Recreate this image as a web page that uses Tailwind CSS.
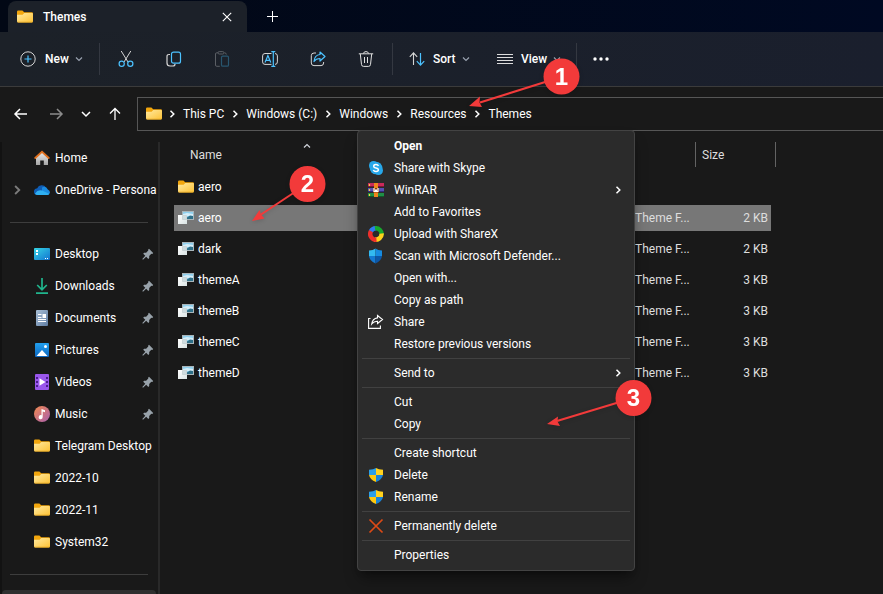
<!DOCTYPE html>
<html lang="en">
  <head>
    <meta charset="UTF-8" />
    <meta name="viewport" content="width=device-width, initial-scale=1.0" />
    <title>Themes</title>
    <script src="https://cdn.jsdelivr.net/npm/@tailwindcss/browser@4"></script>
  </head>
  <body
    class="relative h-screen overflow-hidden flex flex-col bg-[#191919] font-['Roboto','Noto_Sans',sans-serif] text-xs text-white"
  >
    <!-- Shared icons -->
    <svg class="absolute size-0" aria-hidden="true">
      <defs>
        <linearGradient id="folderFill" x1="0" y1="0" x2="1" y2="1">
          <stop offset="0" stop-color="#ffe9a0" />
          <stop offset="1" stop-color="#fdc235" />
        </linearGradient>
        <linearGradient id="paper" x1="0" y1="0" x2="1" y2="1">
          <stop offset="0" stop-color="#ffffff" />
          <stop offset="1" stop-color="#d9e3e3" />
        </linearGradient>
        <linearGradient id="desk" x1="0" y1="0" x2="1" y2="1">
          <stop offset="0" stop-color="#35d6e6" />
          <stop offset="1" stop-color="#1273d0" />
        </linearGradient>
        <linearGradient id="doc" x1="0" y1="0" x2="1" y2="1">
          <stop offset="0" stop-color="#a9bfd6" />
          <stop offset="1" stop-color="#5f7da3" />
        </linearGradient>
        <linearGradient id="music" x1="0" y1="0" x2="1" y2="1">
          <stop offset="0" stop-color="#f28a4e" />
          <stop offset="1" stop-color="#a85fb0" />
        </linearGradient>
        <linearGradient id="pic" x1="0" y1="0" x2="0" y2="1">
          <stop offset="0" stop-color="#22a0ee" />
          <stop offset="1" stop-color="#0c66c0" />
        </linearGradient>
        <linearGradient id="house" x1="0" y1="0" x2="0" y2="1">
          <stop offset="0" stop-color="#ececec" />
          <stop offset="1" stop-color="#a5a5a5" />
        </linearGradient>
      </defs>
      <symbol id="folder" viewBox="0 0 16 16">
        <path d="M0 2.700Q0 1.500 1.200 1.500h4.200l1.800 1.700h7.600Q16 3.200 16 4.500v4H0z" fill="#f2a60d" />
        <path d="M0 5.700h5.600L7.300 4.100h7.600Q16 4.100 16 5.200v7.100q0 1.200-1.200 1.200H1.200Q0 13.500 0 12.300z" fill="url(#folderFill)" />
        <path d="M.3 12.800q.3.700 1 .7h13.400q.7 0 1-.7z" fill="#e5a51c" />
      </symbol>
      <symbol id="theme" viewBox="0 0 16 16">
        <path d="M4 1h12v9H4z" fill="#a9b5ba" />
        <path d="M5 2h10v7H5z" fill="#8fd0ee" />
        <path d="M5 4l4-1 6 1v2H5z" fill="#d4eefa" />
        <path d="M9 7.500l3-2 3 .5V9H9z" fill="#2d6f88" />
        <path d="M0 5h9v9H0z" fill="url(#paper)" />
        <path d="M4.500 5.500h4v4h-4z" fill="#cfdcdf" stroke="#b4c2c5" stroke-width=".5" />
      </symbol>
      <symbol id="chevron" viewBox="0 0 8 8">
        <path d="M2.500.8 5.800 4 2.500 7.200" fill="none" stroke="currentColor" stroke-width="1.500" />
      </symbol>
      <symbol id="down" viewBox="0 0 8 8">
        <path d="M1 2.500 4 5.500 7 2.500" fill="none" stroke="currentColor" stroke-width="1.200" />
      </symbol>
      <symbol id="pin" viewBox="0 0 12 12">
        <path d="M7 .8 11.200 5l-.9.900-1-.2L7.200 8v2l-.9.900L4.200 8.700 1 11.700l-.700-.7 3-3.200L1.200 5.700l.9-.9h2l2.200-2.200-.2-.9z" fill="#98a2aa" />
      </symbol>
      <symbol id="uac" viewBox="0 0 14 14">
        <path d="M7 0Q4.500 1.800 0 1.800V7h7z" fill="#2b9fe8" />
        <path d="M7 0q2.500 1.800 7 1.800V7H7z" fill="#ffd21e" />
        <path d="M0 7h7v7Q.8 11.500 0 7z" fill="#ffc90e" />
        <path d="M14 7H7v7q6.200-2.500 7-7z" fill="#1a83d6" />
      </symbol>
    </svg>

    <!-- Title bar -->
    <header class="shrink-0 h-8 pl-2 flex items-end bg-linear-to-r from-[#020815] to-[#000922]">
      <div class="h-[31px] w-[239px] pl-[9px] pr-3 flex items-center rounded-t-lg bg-[#1c2129]">
        <svg class="size-4"><use href="#folder" /></svg>
        <span class="ml-[10px] grow font-medium">Themes</span>
        <button class="size-4 grid place-items-center" aria-label="Close tab">
          <svg class="size-[10px]" viewBox="0 0 10 10"><path d="M.8.800l8.400 8.400M9.200.8.800 9.200" stroke="#fff" stroke-width="1.100" /></svg>
        </button>
      </div>
      <button class="h-8 w-[50px] grid place-items-center" aria-label="New tab">
        <svg class="size-[11px]" viewBox="0 0 11 11"><path d="M5.500 0v11M0 5.500h11" stroke="#fff" /></svg>
      </button>
    </header>

    <!-- Command bar -->
    <div
      class="shrink-0 h-[55px] flex items-center border-b border-[#3b3b3b] bg-linear-to-r from-[#1c2128] to-[#1a1f2d]"
      role="toolbar"
      aria-label="Commands"
    >
      <button class="w-[99px] pl-5 flex items-center font-medium">
        <svg class="size-4" viewBox="0 0 16 16" fill="none">
          <circle cx="8" cy="8" r="7.200" stroke="#d5d5d5" />
          <path d="M8 4.500v7M4.500 8h7" stroke="#4cc2ff" stroke-width="1.200" />
        </svg>
        <span class="ml-[9px]">New</span>
        <svg class="ml-[6px] size-2 text-gray-400"><use href="#down" /></svg>
      </button>
      <div class="h-8 w-px bg-[#343841]"></div>
      <div class="px-[2px] flex">
        <button class="w-12 grid place-items-center" aria-label="Cut">
          <svg class="size-4" viewBox="0 0 16 16" fill="none">
            <path d="M3.200 0l6.800 11M12.800 0 6 11" stroke="#d5d5d5" />
            <circle cx="3.700" cy="12.800" r="2.600" stroke="#4cc2ff" stroke-width="1.200" />
            <circle cx="12.300" cy="12.800" r="2.600" stroke="#4cc2ff" stroke-width="1.200" />
          </svg>
        </button>
        <button class="w-12 grid place-items-center" aria-label="Copy">
          <svg class="size-4" viewBox="0 0 16 16" fill="none">
            <path d="M4 3.500H3Q1 3.500 1 5.500V12q0 3 3 3h3q2 0 2-2" stroke="#d5d5d5" stroke-width="1.200" />
            <rect x="5.500" y="1.200" width="9" height="11" rx="2" stroke="#4cc2ff" stroke-width="1.200" />
          </svg>
        </button>
        <button class="w-12 grid place-items-center" aria-label="Paste" disabled>
          <svg class="size-4" viewBox="0 0 16 16" fill="none">
            <path d="M4 1.800H2.800Q1.500 1.800 1.500 3v11q0 1.300 1.300 1.300h3M10.500 1.800q1.800 0 1.800 1.700" stroke="#5b5f65" />
            <rect x="4" y=".6" width="6" height="2.400" rx="1.200" stroke="#5b5f65" />
            <rect x="7.500" y="5.200" width="7" height="10" rx="1.300" stroke="#28566f" stroke-width="1.200" />
          </svg>
        </button>
        <button class="w-12 grid place-items-center" aria-label="Rename">
          <svg class="size-4" viewBox="0 0 16 16" fill="none">
            <path d="M9.500 2.500H3q-2.400 0-2.400 2.400v6q0 2.500 2.400 2.500h6.500M13 2.500q2.400.2 2.400 2.400v6q0 2.500-2.400 2.500" stroke="#d5d5d5" />
            <path d="M3 11.500 5.900 4.500 8.800 11.500M4 9.300h3.800M11.300 1v14M9.300.6h4M9.300 15.400h4" stroke="#4cc2ff" stroke-width="1.200" />
          </svg>
        </button>
        <button class="w-12 grid place-items-center" aria-label="Share">
          <svg class="size-4" viewBox="0 0 16 16" fill="none">
            <path d="M6 2H4Q1.300 2 1.300 4.700V12q0 2.600 2.700 2.600h7q2.600 0 2.600-2.600v-1" stroke="#d5d5d5" />
            <path d="M10 1l5 4.500L10 10V7.500q-4 0-6 3Q4.500 4 10 3.500z" stroke="#4cc2ff" stroke-width="1.200" stroke-linejoin="round" />
          </svg>
        </button>
        <button class="w-12 grid place-items-center" aria-label="Delete">
          <svg class="size-4" viewBox="0 0 16 16" fill="none" stroke="#e0e0e0">
            <path d="M.8 2.800h14.400M5.500 2.500Q5.700.6 8 .6t2.500 1.900M2.300 3l1.200 10.500q.2 1.900 2 1.900h5q1.800 0 2-1.900L13.700 3M6.500 6v6M9.500 6v6" />
          </svg>
        </button>
      </div>
      <div class="h-8 w-px bg-[#343841]"></div>
      <button class="w-[104px] pl-4 flex items-center font-medium">
        <svg class="size-4" viewBox="0 0 16 16" fill="none">
          <path d="M4.500 14V2M.8 5.800l3.700-4 3.700 4" stroke="#d5d5d5" stroke-width="1.100" />
          <path d="M11.500 2v12M7.800 10.200l3.700 4 3.700-4" stroke="#4cc2ff" stroke-width="1.200" />
        </svg>
        <span class="ml-2">Sort</span>
        <svg class="ml-[6px] size-2 text-gray-400"><use href="#down" /></svg>
      </button>
      <button class="w-[79px] flex items-center font-medium">
        <svg class="size-4" viewBox="0 0 16 16"><path d="M0 3.500h16M0 6.500h16M0 9.500h16M0 12.500h16" stroke="#dcdcdc" /></svg>
        <span class="ml-2">View</span>
        <svg class="ml-[6px] size-2 text-gray-400"><use href="#down" /></svg>
      </button>
      <div class="h-8 w-px bg-[#343841]"></div>
      <button class="w-12 grid place-items-center" aria-label="See more">
        <svg class="h-1 w-4" viewBox="0 0 16 4" fill="#fff"><circle cx="2" cy="2" r="1.700" /><circle cx="8" cy="2" r="1.700" /><circle cx="14" cy="2" r="1.700" /></svg>
      </button>
    </div>

    <!-- Navigation -->
    <nav class="shrink-0 h-11 pt-[10px] flex" aria-label="Address">
      <div class="w-[137px] h-[34px] pl-[13px] flex items-center">
        <button class="w-4" aria-label="Back">
          <svg class="size-4" viewBox="0 0 16 16" fill="none" stroke="#fff" stroke-width="1.500"><path d="M14 8H2M7 3 2 8l5 5" /></svg>
        </button>
        <button class="ml-[19px] w-4" aria-label="Forward">
          <svg class="size-4" viewBox="0 0 16 16" fill="none" stroke="#8c8c8c" stroke-width="1.500"><path d="M2 8h12M9 3l5 5-5 5" /></svg>
        </button>
        <button class="ml-[17px] w-[10px]" aria-label="Recent locations">
          <svg class="size-[10px]" viewBox="0 0 10 10" fill="none" stroke="#fff" stroke-width="1.500"><path d="M1 3l4 4 4-4" /></svg>
        </button>
        <button class="ml-4 w-4" aria-label="Up">
          <svg class="size-4" viewBox="0 0 16 16" fill="none" stroke="#fff" stroke-width="1.300"><path d="M8 14V2.500M3 7.500l5-5 5 5" /></svg>
        </button>
      </div>
      <div class="grow h-[34px] pl-2 flex items-center border border-r-0 border-[#565656]">
        <svg class="size-4"><use href="#folder" /></svg>
        <svg class="mx-[6px] size-2"><use href="#chevron" /></svg>
        <button class="pl-[1px]">This PC</button>
        <svg class="mx-[7px] size-2"><use href="#chevron" /></svg>
        <button>Windows (C:)</button>
        <svg class="mx-[7px] size-2"><use href="#chevron" /></svg>
        <button>Windows</button>
        <svg class="mx-[7px] size-2"><use href="#chevron" /></svg>
        <button>Resources</button>
        <svg class="mx-[7px] size-2"><use href="#chevron" /></svg>
        <button>Themes</button>
      </div>
    </nav>

    <main class="grow min-h-0 flex">
      <!-- Sidebar -->
      <aside class="shrink-0 w-[160px] pt-[11px]">
        <div class="h-full border-l-2 border-l-[#121212] border-r-2 border-r-[#292929] overflow-hidden">
          <ul class="w-[154px] *:h-8 *:flex *:items-center *:whitespace-nowrap">
            <li class="pl-8">
              <svg class="shrink-0 size-4" viewBox="0 0 16 16">
                <path d="M2 7.500 8 2l6 5.500V15H9.800v-4.500H6.200V15H2z" fill="url(#house)" />
                <path d="M1.200 8 8 1.800 14.800 8" fill="none" stroke="#e0701e" stroke-width="1.800" stroke-linecap="round" />
              </svg>
              <a href="#home" class="ml-[5px]">Home</a>
            </li>
            <li class="pl-[10px]">
              <svg class="shrink-0 size-[10px] text-[#7b7b7b]"><use href="#chevron" /></svg>
              <svg class="shrink-0 ml-3 size-4" viewBox="0 0 16 16">
                <path d="M3.500 13A3.400 3.400 0 0 1 3.200 6.200 5 5 0 0 1 12 5.500z" fill="#0f5db5" />
                <path d="M8 5.500q4-2 5.800 2Q16 8.500 16 10.500 15.500 13 13 13H8z" fill="#1b8be0" />
                <path d="M1 11.500Q4 7 8 8.500l7.200 3.300Q14.500 13 13 13H3.500Q1.800 13 1 11.500z" fill="#2fb0f2" />
              </svg>
              <a href="#onedrive" class="ml-[5px]">OneDrive - Persona</a>
            </li>
            <li class="px-2"><hr class="grow border-[#3d3d3d]" /></li>
            <li class="pl-8 pr-[2px]">
              <svg class="shrink-0 size-4" viewBox="0 0 16 16">
                <rect y="2" width="16" height="12" rx="1" fill="url(#desk)" />
                <path d="M2 4h2v2H2zM2 7h2v2H2zM11 12h1v1h-1zM13 12h1v1h-1z" fill="#fff" />
              </svg>
              <a href="#desktop" class="ml-[5px] grow">Desktop</a>
              <svg class="size-3"><use href="#pin" /></svg>
            </li>
            <li class="pl-8 pr-[2px]">
              <svg class="shrink-0 size-4" viewBox="0 0 16 16" fill="none" stroke="#20b58d" stroke-width="1.700">
                <path d="M8 0v11.500M3.200 7 8 11.800 12.800 7M2 15.100h12" />
              </svg>
              <a href="#downloads" class="ml-[5px] grow">Downloads</a>
              <svg class="size-3"><use href="#pin" /></svg>
            </li>
            <li class="pl-8 pr-[2px]">
              <svg class="shrink-0 size-4" viewBox="0 0 16 16">
                <rect x="2" width="12" height="16" rx="1" fill="url(#doc)" />
                <path d="M4 4.500h3.500M4 7.500h3.500M4 9.500h8M4 11.500h8" stroke="#fff" />
                <path d="M8.500 4h3.500v4H8.500z" fill="#fff" />
              </svg>
              <a href="#documents" class="ml-[5px] grow">Documents</a>
              <svg class="size-3"><use href="#pin" /></svg>
            </li>
            <li class="pl-8 pr-[2px]">
              <svg class="shrink-0 size-4" viewBox="0 0 16 16">
                <rect x="1" y="1" width="14" height="14" rx="1" fill="url(#pic)" />
                <path d="M2.500 14 8 8l5.500 6z" fill="#fff" />
                <circle cx="11.500" cy="4.500" r="1.500" fill="#fff" />
              </svg>
              <a href="#pictures" class="ml-[5px] grow">Pictures</a>
              <svg class="size-3"><use href="#pin" /></svg>
            </li>
            <li class="pl-8 pr-[2px]">
              <svg class="shrink-0 size-4" viewBox="0 0 16 16">
                <rect x="1" width="14" height="16" rx="1" fill="#9a57ec" />
                <path d="M2 3h2v2H2zM2 7h2v2H2zM2 11h2v2H2zM12 3h2v2h-2zM12 7h2v2h-2zM12 11h2v2h-2z" fill="#4b1d8f" />
                <path d="M5.500 4.200 11.500 8l-6 3.800z" fill="#fff" />
              </svg>
              <a href="#videos" class="ml-[5px] grow">Videos</a>
              <svg class="size-3"><use href="#pin" /></svg>
            </li>
            <li class="pl-8 pr-[2px]">
              <svg class="shrink-0 size-4" viewBox="0 0 16 16">
                <circle cx="8" cy="8" r="8" fill="url(#music)" />
                <path d="M7.500 3l3.500 1.200v2L8.700 5.500V11a2 2 0 1 1-1.200-1.700z" fill="#fff" />
              </svg>
              <a href="#music-folder" class="ml-[5px] grow">Music</a>
              <svg class="size-3"><use href="#pin" /></svg>
            </li>
            <li class="pl-8">
              <svg class="shrink-0 size-4"><use href="#folder" /></svg>
              <a href="#telegram" class="ml-[5px]">Telegram Desktop</a>
            </li>
            <li class="pl-8">
              <svg class="shrink-0 size-4"><use href="#folder" /></svg>
              <a href="#2022-10" class="ml-[5px]">2022-10</a>
            </li>
            <li class="pl-8">
              <svg class="shrink-0 size-4"><use href="#folder" /></svg>
              <a href="#2022-11" class="ml-[5px]">2022-11</a>
            </li>
            <li class="pl-8">
              <svg class="shrink-0 size-4"><use href="#folder" /></svg>
              <a href="#system32" class="ml-[5px]">System32</a>
            </li>
            <li class="px-2"><hr class="grow border-[#3d3d3d]" /></li>
            <li class="rounded-sm bg-[#2f2f2f]"></li>
          </ul>
        </div>
      </aside>

      <!-- File list -->
      <section class="grow pl-[14px] pt-[6px]">
        <table class="w-[602px] table-fixed border-separate border-spacing-x-0 border-spacing-y-[5px] text-left">
          <colgroup>
            <col class="w-[266px]" />
            <col class="w-[195px]" />
            <col class="w-[60px]" />
            <col class="w-[76px]" />
            <col class="w-[5px]" />
          </colgroup>
          <thead>
            <tr class="h-[27px] align-top *:p-0 *:font-normal">
              <th class="relative">
                <div class="h-[25px] pl-4 flex items-center text-[#dedede]">Name</div>
                <svg class="absolute left-1/2 top-0 size-2 -translate-x-1/2 rotate-180 text-gray-300"><use href="#down" /></svg>
              </th>
              <th></th>
              <th></th>
              <th><div class="h-[25px] pl-[6px] flex items-center border-l border-[#636363] text-[#dedede]">Size</div></th>
              <th><div class="h-[25px] border-r border-[#636363]"></div></th>
            </tr>
          </thead>
          <tbody class="[&_tr]:h-[26px] [&_td]:p-0 [&_td]:text-[#dedede] [&_td:nth-child(4)]:pr-[3px] [&_td:nth-child(4)]:text-right">
            <tr>
              <td><div class="pl-1 flex items-center gap-1 text-white"><svg class="size-4"><use href="#folder" /></svg>aero</div></td>
              <td></td><td></td><td></td><td></td>
            </tr>
            <tr class="[&_td:not(:last-child)]:bg-[#777777]">
              <td><div class="pl-1 flex items-center gap-1 text-white"><svg class="size-4"><use href="#theme" /></svg>aero</div></td>
              <td></td><td>Theme F...</td><td>2 KB</td><td></td>
            </tr>
            <tr>
              <td><div class="pl-1 flex items-center gap-1 text-white"><svg class="size-4"><use href="#theme" /></svg>dark</div></td>
              <td></td><td>Theme F...</td><td>2 KB</td><td></td>
            </tr>
            <tr>
              <td><div class="pl-1 flex items-center gap-1 text-white"><svg class="size-4"><use href="#theme" /></svg>themeA</div></td>
              <td></td><td>Theme F...</td><td>3 KB</td><td></td>
            </tr>
            <tr>
              <td><div class="pl-1 flex items-center gap-1 text-white"><svg class="size-4"><use href="#theme" /></svg>themeB</div></td>
              <td></td><td>Theme F...</td><td>3 KB</td><td></td>
            </tr>
            <tr>
              <td><div class="pl-1 flex items-center gap-1 text-white"><svg class="size-4"><use href="#theme" /></svg>themeC</div></td>
              <td></td><td>Theme F...</td><td>3 KB</td><td></td>
            </tr>
            <tr>
              <td><div class="pl-1 flex items-center gap-1 text-white"><svg class="size-4"><use href="#theme" /></svg>themeD</div></td>
              <td></td><td>Theme F...</td><td>3 KB</td><td></td>
            </tr>
          </tbody>
        </table>
      </section>
    </main>

    <!-- Context menu -->
    <div
      class="absolute left-[357px] top-[130px] w-[278px] p-1 rounded-sm border border-[#434343] bg-[#2b2b2b] shadow-lg shadow-black/40 [&_button]:w-full [&_button]:h-[22px] [&_button]:pl-[6px] [&_button]:pr-2 [&_button]:grid [&_button]:grid-cols-[16px_1fr_8px] [&_button]:gap-x-[10px] [&_button]:items-center [&_button]:text-left [&_span]:col-start-2 [&_hr]:my-[3px] [&_hr]:border-[#414141]"
      role="menu"
    >
      <button role="menuitem" class="font-bold"><span>Open</span></button>
      <button role="menuitem">
        <svg class="size-4" viewBox="0 0 16 16">
          <circle cx="5.500" cy="5.500" r="4.500" fill="#28a8ea" /><circle cx="10.500" cy="10.500" r="4.500" fill="#28a8ea" /><circle cx="8" cy="8" r="6.300" fill="#28a8ea" />
          <path d="M10.500 5.800Q9.800 4.500 8 4.500 5.700 4.500 5.700 6.200 5.700 7.600 8 8t2.400 1.800q0 1.700-2.400 1.700-2 0-2.700-1.500" fill="none" stroke="#fff" stroke-width="1.500" />
        </svg>
        <span>Share with Skype</span>
      </button>
      <button role="menuitem">
        <svg class="size-4" viewBox="0 0 16 16">
          <path d="M0 1h16v4H0z" fill="#c92a5b" /><path d="M0 6h16v4H0z" fill="#5750b5" /><path d="M0 11h16v4H0z" fill="#1f8f45" />
          <path d="M0 4h16v1H0z" fill="#7c1438" /><path d="M0 9h16v1H0z" fill="#302a7c" /><path d="M0 14h16v1H0z" fill="#0e5a28" />
          <path d="M1.500 2v2M1.500 7v2M1.500 12v2" stroke="#f3cf45" stroke-width="1.200" />
          <path d="M6 1h4v14H6z" fill="#f0861c" />
          <path d="M5 6h6v4.500H5z" fill="#8a3b12" /><path d="M6 6v3.500h1.500V8h1v1.500H10V6" fill="none" stroke="#fff" stroke-width="1.200" />
        </svg>
        <span>WinRAR</span>
        <svg class="size-2"><use href="#chevron" /></svg>
      </button>
      <button role="menuitem"><span>Add to Favorites</span></button>
      <button role="menuitem">
        <svg class="size-4" viewBox="0 0 16 16" fill="none" stroke-width="4.500">
          <path d="M2.800 5.500A5.700 5.700 0 0 1 8.500 2.300" stroke="#2f7cf0" />
          <path d="M7 2.400A5.700 5.700 0 0 1 13.500 9" stroke="#17a82e" />
          <path d="M13.600 7.500A5.700 5.700 0 0 1 6.500 13.500" stroke="#ffd21c" />
          <path d="M8.500 13.700A5.700 5.700 0 0 1 3 5.200" stroke="#ee2f2b" />
        </svg>
        <span>Upload with ShareX</span>
      </button>
      <button role="menuitem">
        <svg class="size-4" viewBox="0 0 16 16">
          <path d="M7.500.5Q5 2.500 1 2.500V8h6.500z" fill="#33baf0" /><path d="M7.500.5Q10 2.500 14 2.500V8H7.500z" fill="#168be0" />
          <path d="M1 8h6.500v7.500Q1.500 13 1 8z" fill="#1479d2" /><path d="M14 8H7.500v7.500Q13.500 13 14 8z" fill="#0c57a8" />
        </svg>
        <span>Scan with Microsoft Defender...</span>
      </button>
      <button role="menuitem"><span>Open with...</span></button>
      <button role="menuitem"><span>Copy as path</span></button>
      <button role="menuitem">
        <svg class="size-4" viewBox="0 0 16 16" fill="none" stroke="#fff" stroke-width="1.100">
          <path d="M2.500 4.500H.6v9.900h11.800v-2.900" /><path d="M9.500 1.500 14.500 5.500 9.500 9.500V7.200Q6 7 3.700 10 4.500 4.500 9.500 3.900z" />
        </svg>
        <span>Share</span>
      </button>
      <button role="menuitem"><span>Restore previous versions</span></button>
      <hr />
      <button role="menuitem">
        <span>Send to</span>
        <svg class="size-2"><use href="#chevron" /></svg>
      </button>
      <hr />
      <button role="menuitem"><span>Cut</span></button>
      <button role="menuitem"><span>Copy</span></button>
      <hr />
      <button role="menuitem"><span>Create shortcut</span></button>
      <button role="menuitem">
        <svg class="size-[14px] justify-self-center"><use href="#uac" /></svg>
        <span>Delete</span>
      </button>
      <button role="menuitem">
        <svg class="size-[14px] justify-self-center"><use href="#uac" /></svg>
        <span>Rename</span>
      </button>
      <hr />
      <button role="menuitem">
        <svg class="size-4" viewBox="0 0 16 16"><path d="M1.500 1.500l13 13M14.500 1.500l-13 13" stroke="#dc4a16" stroke-width="1.700" /></svg>
        <span>Permanently delete</span>
      </button>
      <hr />
      <button role="menuitem"><span>Properties</span></button>
    </div>

    <!-- Numbered steps -->
    <svg class="absolute left-[468px] top-[56px] w-[114px] h-[54px] drop-shadow-sm" viewBox="0 0 114 54">
      <path d="M93 21 12 46.500" stroke="#f23a3a" stroke-width="2" />
      <path d="M1 50 12 40.500 11.500 46.500 14 51z" fill="#f23a3a" />
      <circle cx="93.500" cy="20.500" r="18" fill="#f23a3a" />
      <text x="93.500" y="29" text-anchor="middle" class="font-['Liberation_Sans',sans-serif] text-2xl font-bold" fill="#fff">1</text>
    </svg>
    <svg class="absolute left-[250px] top-[164px] w-[78px] h-[60px] drop-shadow-sm" viewBox="0 0 78 60">
      <path d="M57 20 11 50.500" stroke="#f23a3a" stroke-width="2" />
      <path d="M2 57 9.500 46 11 50.500 14.500 54.500z" fill="#f23a3a" />
      <circle cx="57.500" cy="20" r="18" fill="#f23a3a" />
      <text x="57.500" y="28" text-anchor="middle" class="font-['Liberation_Sans',sans-serif] text-2xl font-bold" fill="#fff">2</text>
    </svg>
    <svg class="absolute left-[546px] top-[378px] w-[108px] h-[50px] drop-shadow-sm" viewBox="0 0 108 50">
      <path d="M87 20 11 43" stroke="#f23a3a" stroke-width="2" />
      <path d="M1 46 12 38.500 11.500 43.500 14 48z" fill="#f23a3a" />
      <circle cx="87.500" cy="20" r="18" fill="#f23a3a" />
      <text x="87.500" y="28" text-anchor="middle" class="font-['Liberation_Sans',sans-serif] text-2xl font-bold" fill="#fff">3</text>
    </svg>
  </body>
</html>
